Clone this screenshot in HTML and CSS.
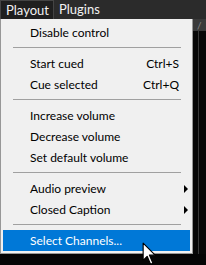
FILE: index.html
```html
<!DOCTYPE html>
<html lang="en">
<head>
  <meta charset="UTF-8" />
  <title>Playout menu</title>
  <link rel="stylesheet" href="styles.css">
</head>
<body>
  <div class="menubar">
    <div class="top-item open">Playout</div>
    <div class="top-item">Plugins</div>
  </div>

  <div class="screen">
    <div class="menu">
      <div class="item">Disable control</div>
      <div class="sep"></div>
      <div class="item">Start cued<span class="key">Ctrl+S</span></div>
      <div class="item">Cue selected<span class="key">Ctrl+Q</span></div>
      <div class="sep"></div>
      <div class="item">Increase volume</div>
      <div class="item">Decrease volume</div>
      <div class="item">Set default volume</div>
      <div class="sep"></div>
      <div class="item sub">Audio preview</div>
      <div class="item sub">Closed Caption</div>
      <div class="sep"></div>
      <div class="item active">Select Channels...</div>
    </div>
    <div class="side">
      <div class="side-top">/</div>
      <div class="side-grid"></div>
    </div>
  </div>

  <!-- mouse pointer over the last entry -->
  <svg class="cursor" width="16" height="24" viewBox="0 0 14 21">
    <path d="M1 1 L1 16 L4.5 12.5 L7.5 19.5 L9.5 18.5 L6.5 11.5 L11.5 11.5 Z" fill="#fff" stroke="#000" stroke-width="1" stroke-linejoin="round"/>
  </svg>
</body>
</html>
```

FILE: styles.css
```css
body {
  margin: 0;
  width: 206px;
  height: 265px;
  overflow: hidden;
  background: #050505;
  font-family: Lato, 'Noto Sans', sans-serif;
  font-size: 12px;
  position: relative;
}
.menubar {
  display: flex;
  height: 19px;
  background: #2b2b2b;
  color: #f2f2f2;
}
.top-item {
  padding: 0 5px;
  line-height: 19px;
  font-size: 13px;
}
.top-item.open {
  width: 42px;
  background: #1f1f1f;
  border: 1px solid #444;
  border-bottom: none;
  line-height: 18px;
}
.screen {
  display: grid;
  grid-template-columns: 193px 1fr;
  height: 235px;
}
.menu {
  background: #f0f0f0;
  border: 1px solid #979797;
  border-top: none;
  padding: 3px 2px 2px 2px;
  box-shadow: 2px 2px 2px rgba(0, 0, 0, 0.4);
  color: #000;
}
.item {
  display: flex;
  justify-content: space-between;
  align-items: center;
  height: 21px;
  padding: 0 11px 0 27px;
  position: relative;
}
.item.sub::after {
  content: "";
  position: absolute;
  right: 2px;
  top: 7px;
  border-left: 4px solid #000;
  border-top: 4px solid transparent;
  border-bottom: 4px solid transparent;
}
.item.active {
  background: #0078d7;
  color: #fff;
}
.sep {
  height: 1px;
  background: #a0a0a0;
  margin: 4px 9px 5px 10px;
}
.side {
  display: flex;
  flex-direction: column;
}
.side-top {
  height: 12px;
  background: #3a3a3a;
  color: #888;
  font-size: 10px;
  padding-left: 4px;
}
.side-grid {
  flex: 1;
  background:
    linear-gradient(to right, transparent 5px, #3a3a3a 5px, #3a3a3a 6px, transparent 6px),
    #080808;
}
.cursor {
  position: absolute;
  left: 142px;
  top: 242px;
}
```
